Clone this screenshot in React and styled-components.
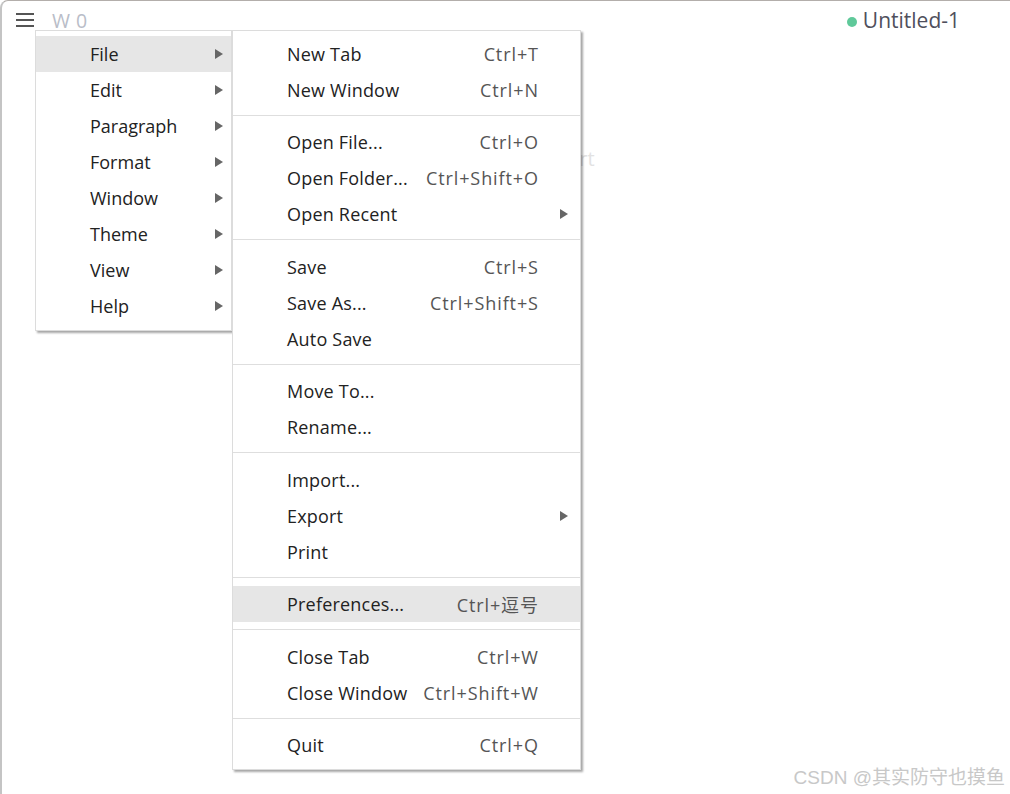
import React from 'react'
import styled, { createGlobalStyle } from 'styled-components'

const GlobalStyle = createGlobalStyle`
    html, body {
        margin: 0;
        padding: 0;
        background: #fff;
    }
    body {
        font-family: "Open Sans", "Noto Sans CJK SC", sans-serif;
    }
`

const fileItems = [
    { label: 'New Tab', shortcut: 'Ctrl+T' },
    { label: 'New Window', shortcut: 'Ctrl+N' },
    'sep',
    { label: 'Open File...', shortcut: 'Ctrl+O' },
    { label: 'Open Folder...', shortcut: 'Ctrl+Shift+O' },
    { label: 'Open Recent', sub: true },
    'sep',
    { label: 'Save', shortcut: 'Ctrl+S' },
    { label: 'Save As...', shortcut: 'Ctrl+Shift+S' },
    { label: 'Auto Save' },
    'sep',
    { label: 'Move To...' },
    { label: 'Rename...' },
    'sep',
    { label: 'Import...' },
    { label: 'Export', sub: true },
    { label: 'Print' },
    'sep',
    { label: 'Preferences...', shortcut: 'Ctrl+逗号', active: true },
    'sep',
    { label: 'Close Tab', shortcut: 'Ctrl+W' },
    { label: 'Close Window', shortcut: 'Ctrl+Shift+W' },
    'sep',
    { label: 'Quit', shortcut: 'Ctrl+Q' },
]

const mainItems = ['File', 'Edit', 'Paragraph', 'Format', 'Window', 'Theme', 'View', 'Help']

function Hamburger() {
    return (
        <svg width="18" height="16" viewBox="0 0 18 16">
            <rect x="0" y="1" width="18" height="2" fill="#555" />
            <rect x="0" y="7" width="18" height="2" fill="#555" />
            <rect x="0" y="13" width="18" height="2" fill="#555" />
        </svg>
    )
}

function App() {
    return (
        <Frame>
            <GlobalStyle />
            <TopBar>
                <LeftTools>
                    <Hamburger />
                    <WordCount>W 0</WordCount>
                </LeftTools>
                <FileTitle>
                    <Dot />
                    Untitled-1
                </FileTitle>
            </TopBar>
            <Editor>
                <Placeholder>Type @ to insert</Placeholder>
            </Editor>

            <MenuLayer>
                <Menu width={197}>
                    {mainItems.map((name, i) => (
                        <MainRow key={name} active={i === 0}>
                            <span>{name}</span>
                            <Arrow />
                        </MainRow>
                    ))}
                </Menu>
                <Menu width={349}>
                    {fileItems.map((item, i) =>
                        item === 'sep' ? (
                            <Separator key={i} />
                        ) : (
                            <SubRow key={i} active={item.active}>
                                <Label>{item.label}</Label>
                                {item.shortcut && <Shortcut>{item.shortcut}</Shortcut>}
                                {item.sub && <SubArrow />}
                            </SubRow>
                        )
                    )}
                </Menu>
            </MenuLayer>

            <Watermark>CSDN @其实防守也摸鱼</Watermark>
        </Frame>
    )
}

export default App

const Frame = styled.div`
    position: relative;
    width: 1010px;
    height: 794px;
    box-sizing: border-box;
    border-top: 1px solid #b3aeab;
    border-left: 2px solid #c4c4c4;
    border-top-left-radius: 8px;
    overflow: hidden;
    background: #fff;
`

const TopBar = styled.div`
    display: flex;
    align-items: center;
    justify-content: space-between;
    height: 42px;
    padding: 0 50px 0 14px;
`

const LeftTools = styled.div`
    display: flex;
    align-items: center;
    gap: 18px;
    margin-top: -4px;
`

const WordCount = styled.span`
    font-size: 19.5px;
    color: #b9bdc8;
    letter-spacing: 0.5px;
`

const FileTitle = styled.div`
    display: flex;
    align-items: center;
    gap: 6px;
    font-size: 21px;
    color: #4f4f5c;
    margin-top: -4px;
`

const Dot = styled.span`
    width: 10px;
    height: 10px;
    border-radius: 50%;
    background: #5fc99a;
    margin-top: 4px;
`

const Editor = styled.div`
    padding: 102px 0 0 442px;
`

const Placeholder = styled.div`
    font-size: 20px;
    color: #e2e2e2;
`

const MenuLayer = styled.div`
    position: absolute;
    top: 29px;
    left: 33px;
    display: flex;
    align-items: flex-start;
`

const Menu = styled.div`
    width: ${p => p.width}px;
    box-sizing: border-box;
    background: #fff;
    border: 1px solid #dcdcdc;
    padding: 5px 0 6px;
    box-shadow: 2px 2px 2px rgba(0, 0, 0, 0.35);
`

const MainRow = styled.div`
    display: flex;
    align-items: center;
    justify-content: space-between;
    height: 36px;
    padding: 0 8px 0 54px;
    font-size: 18px;
    color: #222;
    background: ${p => (p.active ? '#e6e6e6' : 'transparent')};
`

const Arrow = styled.span`
    width: 0;
    height: 0;
    border-top: 5px solid transparent;
    border-bottom: 5px solid transparent;
    border-left: 8px solid #666;
`

const SubArrow = styled(Arrow)`
    margin-right: -30px;
`

const SubRow = styled.div`
    display: flex;
    align-items: center;
    justify-content: space-between;
    height: 36px;
    padding: 0 42px 0 54px;
    font-size: 18px;
    color: #222;
    background: ${p => (p.active ? '#e6e6e6' : 'transparent')};
`

const Label = styled.span`
    letter-spacing: 0.2px;
`

const Shortcut = styled.span`
    color: #555;
    letter-spacing: 0.9px;
    margin-right: -0.9px;
`

const Separator = styled.div`
    height: 1px;
    background: #dedede;
    margin: 7px 0 8.43px;
`

const Watermark = styled.div`
    position: absolute;
    right: 5px;
    bottom: 5px;
    font-size: 19px;
    color: #c8c8c8;
    font-family: "Liberation Sans", "Noto Sans CJK SC", sans-serif;
`
